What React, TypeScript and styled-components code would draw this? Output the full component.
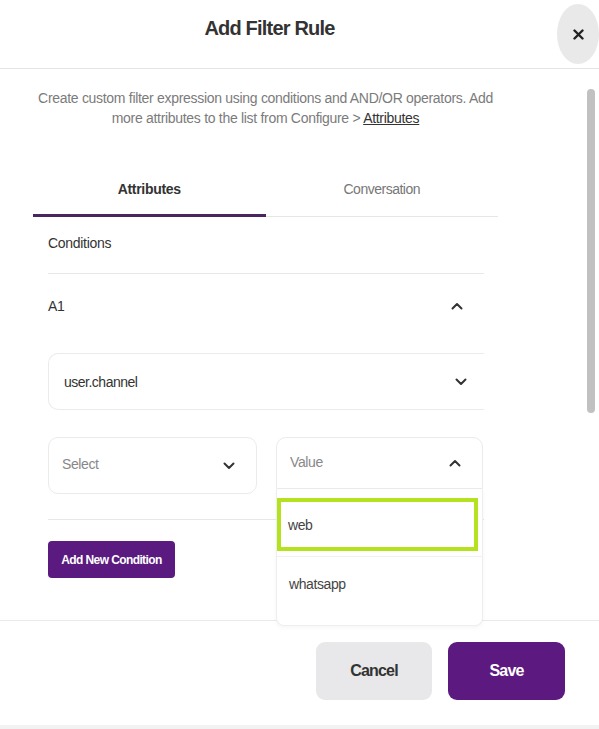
import React from "react";
import styled, { createGlobalStyle } from "styled-components";

const Global = createGlobalStyle`
  html, body { margin: 0; padding: 0; background: #ffffff; }
  body {
    font-family: "Liberation Sans", Arial, sans-serif;
    font-size: 14px;
    letter-spacing: -0.4px;
    color: #333;
  }
  * { box-sizing: border-box; }
`;

const Modal = styled.div`
  width: 599px;
  height: 729px;
  display: flex;
  flex-direction: column;
  background: #fff;
  overflow: hidden;
`;

const Header = styled.header`
  height: 69px;
  display: flex;
  align-items: center;
  gap: 18px;
  border-bottom: 1px solid #e4e4e4;
  flex-shrink: 0;
`;

const Title = styled.h1`
  flex: 1;
  margin: 0 0 12px;
  text-align: center;
  font-size: 20px;
  line-height: 24px;
  letter-spacing: -0.8px;
  font-weight: 700;
  color: #333;
`;

const CloseButton = styled.button`
  width: 42px;
  height: 60px;
  border: none;
  border-radius: 50%;
  background: #e9e9e9;
  display: flex;
  align-items: center;
  justify-content: center;
  padding: 0;
`;

const Body = styled.div`
  flex: 1;
  display: flex;
  min-height: 0;
`;

const Content = styled.div`
  width: 498px;
  padding-left: 33px;
  padding-top: 19px;
  display: flex;
  flex-direction: column;
`;

const ScrollThumb = styled.div`
  width: 8px;
  height: 324px;
  margin: 20px 4px 0 auto;
  border-radius: 4px;
  background: #c1c1c1;
`;

const Description = styled.p`
  margin: 0;
  text-align: center;
  font-size: 14px;
  line-height: 20px;
  letter-spacing: -0.3px;
  color: #7b7b7b;
  white-space: nowrap;
`;

const DescLink = styled.a`
  color: #333;
  text-decoration: underline;
`;

const Tabs = styled.div`
  display: flex;
  margin-top: 37px;
  border-bottom: 1px solid #e6e6e6;
`;

const Tab = styled.div<{ $active?: boolean }>`
  flex: 1;
  text-align: center;
  font-size: 14px;
  line-height: 20px;
  padding: 14px 0 15px;
  letter-spacing: ${(p) => (p.$active ? "-0.3px" : "-0.5px")};
  font-weight: ${(p) => (p.$active ? 700 : 400)};
  color: ${(p) => (p.$active ? "#333" : "#777")};
  border-bottom: 3px solid ${(p) => (p.$active ? "#4a2562" : "transparent")};
  margin-bottom: -1px;
`;

const Section = styled.div`
  padding: 0 14px 0 15px;
  display: flex;
  flex-direction: column;
`;

const SectionLabel = styled.div`
  line-height: 20px;
  padding: 16px 0 20px;
  letter-spacing: -0.3px;
  border-bottom: 1px solid #e8e8e8;
  color: #333;
`;

const GroupHeader = styled.div`
  display: flex;
  align-items: center;
  justify-content: space-between;
  padding: 22px 21px 0 0;
  line-height: 20px;
  color: #333;
`;

const SelectBox = styled.div<{ $open?: boolean; $clipped?: boolean }>`
  position: relative;
  height: ${(p) => (p.$open ? "52px" : "57px")};
  display: flex;
  align-items: center;
  justify-content: space-between;
  padding: 0 ${(p) => (p.$clipped ? "17px" : "21px")} 0 ${(p) => (p.$clipped ? "15px" : "13px")};
  border: 1px solid #ebebeb;
  border-radius: ${(p) =>
    p.$clipped ? "10px 0 0 10px" : p.$open ? "10px 10px 0 0" : "10px"};
  border-right: ${(p) => (p.$clipped ? "none" : "1px solid #ebebeb")};
  letter-spacing: ${(p) => (p.$clipped ? "-0.5px" : "-0.4px")};
  color: #333;
  background: #fff;
  width: 100%;
`;

const Placeholder = styled.span`
  color: #888;
  margin-top: -3px;
`;

const FieldStack = styled.div`
  margin-top: 37px;
`;

const FieldRow = styled.div`
  display: grid;
  grid-template-columns: 209px 207px;
  column-gap: 19px;
  margin-top: 27px;
  padding-bottom: 25px;
  border-bottom: 1px solid #e8e8e8;
  align-items: start;
`;

const Dropdown = styled.div`
  position: absolute;
  top: 51px;
  left: -1px;
  right: -1px;
  background: #fff;
  border: 1px solid #eeeeee;
  border-top: none;
  border-radius: 0 0 8px 8px;
  box-shadow: 0 2px 4px rgba(0, 0, 0, 0.04);
  padding: 9px 0 15px;
  z-index: 2;
`;

const Option = styled.div<{ $highlight?: boolean }>`
  display: flex;
  align-items: center;
  color: #444;
  ${(p) =>
    p.$highlight
      ? `
    height: 53px;
    margin-right: 4px;
    padding-left: 7px;
    border: 4.5px solid #b5e21f;
  `
      : `
    height: 54px;
    margin-top: 5px;
    padding-left: 12px;
    border-top: 1px solid #f1f1f1;
  `}
`;

const AddButton = styled.button`
  align-self: flex-start;
  margin-top: 21px;
  height: 37px;
  width: 127px;
  padding: 0;
  border: none;
  border-radius: 4px;
  background: #5a1a7f;
  color: #fff;
  font-family: inherit;
  font-size: 12px;
  letter-spacing: -0.6px;
  font-weight: 700;
`;

const Footer = styled.footer`
  height: 109px;
  display: flex;
  justify-content: flex-end;
  align-items: flex-start;
  gap: 16px;
  padding: 21px 34px 0 0;
  border-top: 1px solid #e9e9e9;
  border-bottom: 4px solid #f2f2f2;
  flex-shrink: 0;
`;

const FooterButton = styled.button<{ $primary?: boolean }>`
  width: ${(p) => (p.$primary ? "117px" : "116px")};
  height: 58px;
  border: none;
  border-radius: 9px;
  font-family: inherit;
  font-size: 16px;
  letter-spacing: -0.8px;
  font-weight: 700;
  background: ${(p) => (p.$primary ? "#5c1a80" : "#e8e7e9")};
  color: ${(p) => (p.$primary ? "#fff" : "#333")};
`;

const Chevron = ({ up }: { up?: boolean }) => (
  <svg width="12" height="8" viewBox="0 0 12 8" fill="none">
    <polyline
      points={up ? "1.5,6.5 6,2 10.5,6.5" : "1.5,1.5 6,6 10.5,1.5"}
      stroke="#333"
      strokeWidth="2"
      strokeLinecap="round"
      strokeLinejoin="round"
    />
  </svg>
);

export default function App() {
  return (
    <>
      <Global />
      <Modal>
        <Header>
          <Title>Add Filter Rule</Title>
          <CloseButton aria-label="close">
            <svg width="11" height="11" viewBox="0 0 11 11">
              <path d="M1.5 1.5 L9.5 9.5 M9.5 1.5 L1.5 9.5" stroke="#222" strokeWidth="2.4" strokeLinecap="round" />
            </svg>
          </CloseButton>
        </Header>
        <Body>
          <Content>
            <Description>
              Create custom filter expression using conditions and AND/OR operators. Add
              <br />
              more attributes to the list from Configure &gt; <DescLink>Attributes</DescLink>
            </Description>
            <Tabs>
              <Tab $active>Attributes</Tab>
              <Tab>Conversation</Tab>
            </Tabs>
            <Section>
              <SectionLabel>Conditions</SectionLabel>
              <GroupHeader>
                <span>A1</span>
                <Chevron up />
              </GroupHeader>
              <FieldStack>
                <SelectBox $clipped>
                  <span>user.channel</span>
                  <Chevron />
                </SelectBox>
              </FieldStack>
              <FieldRow>
                <SelectBox>
                  <Placeholder>Select</Placeholder>
                  <Chevron />
                </SelectBox>
                <SelectBox $open>
                  <Placeholder>Value</Placeholder>
                  <Chevron up />
                  <Dropdown>
                    <Option $highlight>web</Option>
                    <Option>whatsapp</Option>
                  </Dropdown>
                </SelectBox>
              </FieldRow>
              <AddButton>Add New Condition</AddButton>
            </Section>
          </Content>
          <ScrollThumb />
        </Body>
        <Footer>
          <FooterButton>Cancel</FooterButton>
          <FooterButton $primary>Save</FooterButton>
        </Footer>
      </Modal>
    </>
  );
}
